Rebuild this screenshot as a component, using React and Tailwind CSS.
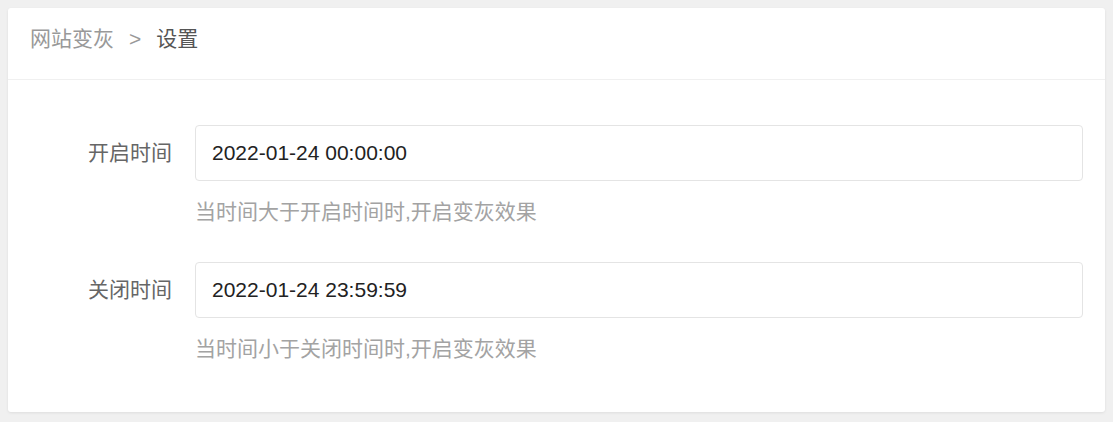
import React from 'react';

const rows = [
  { label: '开启时间', value: '2022-01-24 00:00:00', hint: '当时间大于开启时间时,开启变灰效果' },
  { label: '关闭时间', value: '2022-01-24 23:59:59', hint: '当时间小于关闭时间时,开启变灰效果' },
];

export default function App() {
  return (
    <div
      className="min-h-screen bg-[#f0f0f0] p-[8px]"
      style={{ fontFamily: '"Liberation Sans", "Noto Sans CJK SC", sans-serif' }}
    >
      <div className="bg-white rounded-[3px] shadow-[0_1px_3px_rgba(0,0,0,0.08)]">
        {/* Header */}
        <div className="h-[72px] border-b border-[#f0f0f0] px-[22px] pt-[16px] flex items-start text-[21px] leading-[30px]">
          <span className="text-[#999]">网站变灰</span>
          <span className="text-[#999] mx-[15px]">&gt;</span>
          <span className="text-[#555]">设置</span>
        </div>

        {/* Form */}
        <div className="pt-[45px] pb-[48px] pr-[22px] flex flex-col gap-[35px]">
          {rows.map((row) => (
            <div key={row.label} className="flex">
              <div className="w-[187px] shrink-0 pr-[23px] h-[56px] flex items-center justify-end text-[21px] text-[#666]">
                {row.label}
              </div>
              <div className="flex-1">
                <div className="h-[56px] border border-[#e4e4e4] rounded-[4px] flex items-center pl-[16px] text-[21px] text-[#222]">
                  {row.value}
                </div>
                <p className="mt-[16px] text-[21px] leading-[30px] text-[#a3a3a3]">{row.hint}</p>
              </div>
            </div>
          ))}
        </div>
      </div>
    </div>
  );
}
